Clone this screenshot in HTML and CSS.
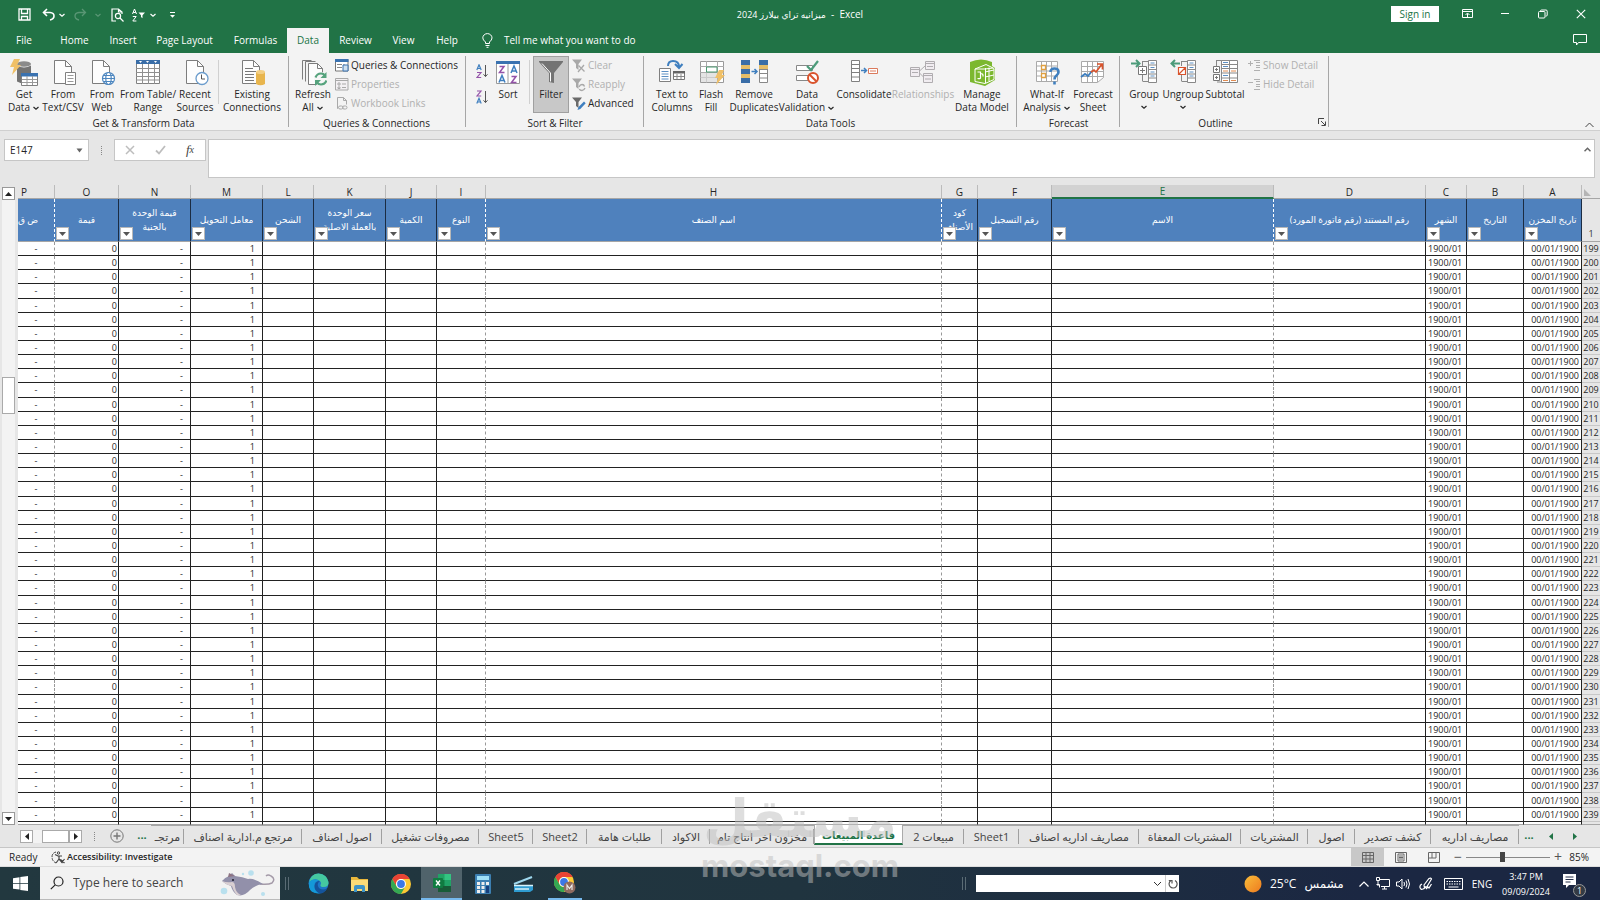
FILE: index.html
```html
<!DOCTYPE html>
<html lang="en">
<head>
<meta charset="utf-8">
<title>ميزانيه تراي بيلارز 2024 - Excel</title>
<link rel="stylesheet" href="styles.css">
</head>
<body>
<svg class="defs" aria-hidden="true">
  <symbol id="chev" viewBox="0 0 8 8"><path d="M1.5 3 4 5.3 6.500 3" fill="none" stroke="currentColor" stroke-width="1.2"/></symbol>
  <symbol id="page" viewBox="0 0 26 26"><path d="M4.500 1.500h11l6 6v17h-17z" fill="#fdfdfd" stroke="#7d7d7d"/><path d="M15.500 1.500v6h6" fill="none" stroke="#7d7d7d"/></symbol>
  <symbol id="funnel" viewBox="0 0 16 16"><path d="M1 1.500h10L7.500 6v6L5 10V6z" fill="currentColor"/></symbol>
  <symbol id="chrome" viewBox="0 0 20 20"><circle cx="10" cy="10" r="10" fill="#fcc934"/><path d="M1.300 5A10 10 0 0 1 18.700 5H10a5 5 0 0 0-4.400 7.400z" fill="#ea4335"/><path d="M1.300 5A10 10 0 0 0 10 20l4.300-7.500a5 5 0 0 1-8.700 0z" fill="#34a853"/><circle cx="10" cy="10" r="5" fill="#fff"/><circle cx="10" cy="10" r="3.900" fill="#3b78e7"/></symbol>
</svg>

<header class="top">
  <div class="titlebar">
    <div class="quick">
      <button class="q save" aria-label="Save"><svg width="13" height="13" viewBox="0 0 13 13" fill="none" stroke="#fff" stroke-width="1.300"><path d="M1 1h11v11H1zM3.500 1v4.500h6V1M3.500 12V8.500h6V12"/></svg></button>
      <button class="q undo" aria-label="Undo"><svg width="13" height="13" viewBox="0 0 13 13" fill="none" stroke="#fff" stroke-width="1.600"><path d="M5 1 1.500 4.500 5 8M1.500 4.500H8q4 .3 4 3.500 0 3-4 4"/></svg></button>
      <button class="q arrow" aria-label="Undo list"><svg width="8" height="8"><use href="#chev"/></svg></button>
      <button class="q redo faded" aria-label="Redo"><svg width="13" height="13" viewBox="0 0 13 13" fill="none" stroke="#fff" stroke-width="1.300"><path d="M8 1l3.500 3.500L8 8M11.500 4.500H5q-4 .3-4 3.500 0 3 4 4"/></svg></button>
      <button class="q arrow2 faded" aria-label="Redo list"><svg width="8" height="8"><use href="#chev"/></svg></button>
      <button class="q prev" aria-label="Print preview"><svg width="13" height="14" viewBox="0 0 13 14" fill="none" stroke="#fff" stroke-width="1.200"><path d="M5 13H1V1h6.500L11 4v2M7.500 1v3H11"/><circle cx="7" cy="8" r="2.600"/><path d="m9 10 3.500 3.500"/></svg></button>
      <button class="q sortq" aria-label="Sort and filter"><svg width="14" height="14" viewBox="0 0 14 14" fill="none" stroke="#fff"><path d="M.5 6 2.500 1l2 5M1.200 4.500h2.600M.8 8.500h3.400L.8 13h3.600"/><path d="M6.500 4.500h6.500l-2.500 2.700v3L9 9V7.200z" fill="#fff" stroke="none"/></svg></button>
      <button class="q arrow3" aria-label="Sort list"><svg width="8" height="8"><use href="#chev"/></svg></button>
      <button class="q more" aria-label="Customize toolbar"><svg width="7" height="8" viewBox="0 0 7 8"><path d="M1 1.500h5" stroke="#fff"/><path d="M1 4h5L3.500 6.700z" fill="#fff"/></svg></button>
    </div>
    <h1 class="title"><bdi dir="rtl">ميزانيه تراي بيلارز 2024</bdi>&nbsp; -&nbsp; Excel</h1>
    <div class="wincontrols">
      <button class="signin">Sign in</button>
      <button class="w1" aria-label="Ribbon display options"><svg width="11" height="10" viewBox="0 0 11 10" fill="none" stroke="#fff"><path d="M.5.5h10v8H.5zM.5 2.500h10M5.500 8V4.500M3.500 6l2-2 2 2"/></svg></button>
      <button class="w2" aria-label="Minimize"><svg width="10" height="10" viewBox="0 0 10 10" stroke="#fff"><path d="M1 4.500h8"/></svg></button>
      <button class="w2" aria-label="Restore"><svg width="10" height="10" viewBox="0 0 10 10" fill="none" stroke="#fff"><rect x=".5" y="2.500" width="6.500" height="6.500" rx="1"/><path d="M2.500 2.500V2q0-1 1-1h4.500q1.200 0 1.200 1.200v4q0 .9-1.500 1"/></svg></button>
      <button class="w2" aria-label="Close"><svg width="10" height="10" viewBox="0 0 10 10" stroke="#fff" stroke-width="1.100"><path d="m.8.8 8.400 8.400m0-8.400L.8 9.200"/></svg></button>
    </div>
  </div>
  <nav class="tabs">
    <a href="#" class="t-file">File</a><a href="#" class="t-home">Home</a><a href="#" class="t-ins">Insert</a><a href="#" class="t-page">Page Layout</a><a href="#" class="t-form">Formulas</a><a href="#" class="t-data on" aria-current="page">Data</a><a href="#" class="t-rev">Review</a><a href="#" class="t-view">View</a><a href="#" class="t-help">Help</a>
    <a href="#" class="tell"><svg width="11" height="15" viewBox="0 0 11 15" fill="none" stroke="#fff"><path d="M3.500 10.500V9Q.8 7 .8 4.900a4.600 4.300 0 0 1 9.200 0Q10 7 7.500 9v1.500zM3.500 12.500h4M4.500 14.300h2"/></svg>Tell me what you want to do</a>
    <button class="comment" aria-label="Comments"><svg width="14" height="12" viewBox="0 0 14 12" fill="none" stroke="#fff"><path d="M.5.5h13v8H5.500L3.500 11V8.500h-3z"/></svg></button>
  </nav>
</header>

<section class="ribbon" aria-label="Data ribbon">
  <div class="group g1">
    <div class="tools">
      <button class="big w38"><svg width="28" height="28" viewBox="0 0 28 28"><ellipse cx="14" cy="5" rx="7" ry="2.800" fill="#8a8a8a"/><path d="M7 6.500q7 4 14 0v16q-7 4-14 0z" fill="#737373"/><path d="M4 0h6L7 6h4L2 16l2-8H0z" fill="#f0c067"/><path d="M11.500 14.500h16v12h-16z" fill="#fff" stroke="#808080"/><path d="M11 14h17v3.500H11z" fill="#3a72b0"/><path d="M12 20.500h15M12 23.500h15M17 17v9M22.500 17v9" stroke="#999"/></svg><span>Get</span><span>Data <svg class="cv" width="8" height="8"><use href="#chev"/></svg></span></button>
      <button class="big w40"><svg width="28" height="28" viewBox="0 0 28 28"><use href="#page" x="1" y="0" width="26" height="26"/><path d="M16.500 13.500h10v12h-10z" fill="#fff" stroke="#808080"/><path d="M18.500 16.500h6M18.500 19.500h6M18.500 22.500h6" stroke="#999"/></svg><span>From</span><span>Text/CSV</span></button>
      <button class="big w38"><svg width="28" height="28" viewBox="0 0 28 28"><use href="#page" x="0" y="0" width="26" height="26"/><g fill="#fff" stroke="#4c86bf" stroke-width="1.200"><circle cx="20.500" cy="19.500" r="6"/><ellipse cx="20.500" cy="19.500" rx="2.700" ry="6"/><path d="M14.500 19.500h12M15.500 16.500h10M15.500 22.500h10"/></g></svg><span>From</span><span>Web</span></button>
      <button class="big w54"><svg width="28" height="28" viewBox="0 0 28 28"><path d="M2.500 2.500h23v22h-23z" fill="#fff" stroke="#808080"/><path d="M2 1h24v4H2z" fill="#3a6ea8"/><path d="m5 2 1.500 2L8 2m4 0 1.500 2L15 2m5 0 1.500 2L23 2" fill="#fff"/><path d="M2 9.500h24M2 13.500h24M2 17.500h24M2 21h24M8.500 5v20M14.500 5v20M20.500 5v20" stroke="#909090"/></svg><span>From Table/</span><span>Range</span></button>
      <button class="big w40"><svg width="28" height="28" viewBox="0 0 28 28"><use href="#page" x="1" y="0" width="26" height="26"/><circle cx="21" cy="19.500" r="6" fill="#fff" stroke="#6b9ccc" stroke-width="1.300"/><path d="M20.500 15.500v4.500h3.500" fill="none" stroke="#555"/></svg><span>Recent</span><span>Sources</span></button>
      <i class="vsep"></i>
      <button class="big w60"><svg width="28" height="28" viewBox="0 0 28 28"><use href="#page" x="0" y="0" width="26" height="26"/><path d="M7 9.500h8M7 12.500h11M7 15.500h9M7 18.500h9M7 21.500h9" stroke="#777"/><path d="M18 13v12q4.500 2.500 9 0V13z" fill="#e8b54d"/><ellipse cx="22.500" cy="13" rx="4.500" ry="2" fill="#f3cf84"/></svg><span>Existing</span><span>Connections</span></button>
    </div>
    <h2>Get &amp; Transform Data</h2>
  </div>
  <div class="group g2">
    <div class="tools">
      <button class="big w38"><svg width="28" height="28" viewBox="0 0 28 28"><path d="M3.500 20.500v-19h9M6.500 22.500v-20h10" fill="none" stroke="#7d7d7d"/><path d="M9.500 4.500h9l5 5v16h-14z" fill="#fdfdfd" stroke="#7d7d7d"/><path d="M18.500 4.500v5h5" fill="none" stroke="#7d7d7d"/><circle cx="22" cy="20" r="7" fill="#f6f6f6"/><path d="M16.500 18.500q1.500-4 5.500-4 2.500 0 4 2M27.500 21.500q-1.500 4-5.500 4-2.500 0-4-2" fill="none" stroke="#56a37d" stroke-width="2.200"/><path d="M27.500 13v6h-6zM16 27v-6h6z" fill="#56a37d"/></svg><span>Refresh</span><span>All <svg class="cv" width="8" height="8"><use href="#chev"/></svg></span></button>
      <div class="stack">
        <button class="small"><svg width="14" height="13" viewBox="0 0 14 13"><path d="M.5.5h12.500v11.500H.5z" fill="#fff" stroke="#777"/><path d="M0 0h13.500v3H0z" fill="#3a72b0"/><path d="M2 5.500h5M2 8.500h5M9 5v4" stroke="#888"/><path d="M8 6h5v6H8z" fill="#cfe0f0" stroke="#3a72b0"/></svg>Queries &amp; Connections</button>
        <button class="small" disabled><svg width="14" height="13" viewBox="0 0 14 13" fill="#f3f0f3" stroke="#a9a9a9"><path d="M.5.5h12.500v11.500H.5zM.5 2.500h12.500M3 5h2v2H3zM3 9h2v1.500H3zM7 6h4M7 9.500h4"/></svg>Properties</button>
        <button class="small" disabled><svg width="14" height="13" viewBox="0 0 14 13" fill="none" stroke="#a9a9a9"><path d="M3 11.500H2.500V.5h6l3 3v4M8.500.5v3h3"/><rect x="3.500" y="9" width="4.500" height="3" rx="1.500"/><rect x="7.500" y="9" width="4.500" height="3" rx="1.500"/></svg>Workbook Links</button>
      </div>
    </div>
    <h2>Queries &amp; Connections</h2>
  </div>
  <div class="group g3">
    <div class="tools">
      <div class="az">
        <button aria-label="Sort A to Z"><svg width="13" height="15" viewBox="0 0 13 15" fill="none"><path d="M.8 6 3 .8 5.200 6M1.600 4.500h2.800" stroke="#3f7fbf" stroke-width="1.200"/><path d="M1 8.500h4L1 13.500h4.200" stroke="#9352a8" stroke-width="1.200"/><path d="M9.500 1v11.500M7.500 10.300l2 2.300 2-2.300" stroke="#555"/></svg></button>
        <button aria-label="Sort Z to A"><svg width="13" height="15" viewBox="0 0 13 15" fill="none"><path d="M1 1h4L1 6h4.200" stroke="#9352a8" stroke-width="1.200"/><path d="M.8 13.500 3 8.300l2.200 5.200M1.600 12h2.800" stroke="#3f7fbf" stroke-width="1.200"/><path d="M9.500 1v11.500M7.500 10.300l2 2.300 2-2.300" stroke="#555"/></svg></button>
      </div>
      <button class="big w36"><svg width="28" height="28" viewBox="0 0 28 28" fill="none"><path d="M2.500 3.500h23v21h-23zM14 4v20" fill="#fff" stroke="#999"/><path d="M2 2h24v3H2z" fill="#3a72b0"/><path d="M5.500 7.500h4.500l-4.500 6h5M17.500 17.500H22l-4.500 6h5" stroke="#9352a8" stroke-width="1.500"/><path d="m5 23.500 3-7 3 7M6 21.500h4M17 14l3-7 3 7M18 12h4" stroke="#3f7fbf" stroke-width="1.500"/></svg><span>Sort</span></button>
      <i class="vsep"></i>
      <button class="big w36 pressed" aria-pressed="true"><svg width="28" height="28" viewBox="0 0 28 28"><path d="M2 2h24v1L17 14v10l-5-1V14L2 3z" fill="#737373"/><path d="M5 4.500 13.500 14v8.500" fill="none" stroke="#fff"/></svg><span>Filter</span></button>
      <div class="stack">
        <button class="small" disabled><svg width="14" height="14" viewBox="0 0 14 14" color="#a8a8a8"><use href="#funnel" x="-1" y="-1" width="16" height="16"/><path d="m6.500 6.500 6 6M12 6l-6 7" stroke="#a8a8a8" stroke-width="1.300"/></svg>Clear</button>
        <button class="small" disabled><svg width="14" height="14" viewBox="0 0 14 14" color="#a8a8a8"><use href="#funnel" x="-1" y="-1" width="16" height="16"/><path d="M7 9q1-2.500 3-2.500t2.500 2M13 10q-1 2.500-3 2.500T7.300 11" fill="none" stroke="#a8a8a8" stroke-width="1.300"/></svg>Reapply</button>
        <button class="small"><svg width="14" height="14" viewBox="0 0 14 14" color="#6a6a6a"><use href="#funnel" x="-1" y="-1" width="16" height="16"/><path d="m5.500 13 1-3L12 4.500l1.700 1.700L8.300 12z" fill="#3f7fbf"/></svg>Advanced</button>
      </div>
    </div>
    <h2>Sort &amp; Filter</h2>
  </div>
  <div class="group g4">
    <div class="tools">
      <button class="big w42"><svg width="28" height="28" viewBox="0 0 28 28" fill="none"><path d="M10 7q0-5 5-5 6 0 6 6M17 5l4 4 3.500-4" stroke="#3f7fbf" stroke-width="2"/><path d="M1.500 9.500h11v13h-11z" fill="#fff" stroke="#808080"/><path d="M3.500 12.500h7M3.500 15h7M3.500 17.500h7M3.500 20h7" stroke="#5c90c4"/><path d="M15.500 12.500h11v8h-11z" fill="#fff" stroke="#777"/><path d="M15 12h12v2.500H15z" fill="#666"/><path d="M16 17.500h10M19 15v5M23 15v5" stroke="#888"/></svg><span>Text to</span><span>Columns</span></button>
      <button class="big w36"><svg width="28" height="28" viewBox="0 0 28 28" fill="none"><path d="M3.500 2.500h23v21h-23z" fill="#fff" stroke="#999"/><path d="M3 7.500h24M3 13.500h24M3 18.500h24M9.500 2v22M20.500 2v22" stroke="#aaa"/><path d="M9.500 8h10.500v5H9.500z" fill="#fff" stroke="#4c9b72"/><path d="M4 14h16v9H4z" fill="#d8d8d8" opacity=".7"/><path d="M22 11h5l-2 5h3l-9 10 2-7h-3z" fill="#f0c067"/></svg><span>Flash</span><span>Fill</span></button>
      <button class="big w50"><svg width="28" height="28" viewBox="0 0 28 28" fill="none"><path d="M1 1h9v23H1z" fill="#3a6ea8"/><path d="M1 6h9v4H1zM1 15h9v4H1z" fill="#e5bd68"/><path d="M19.500 1.500h8v22h-8zM19 6.500h9M19 10.500h9M19 14.500h9M19 19h9" stroke="#888" fill="#fff"/><path d="M19 1h9v5h-9z" fill="#3a6ea8"/><path d="M19 6h9v4h-9z" fill="#e5bd68"/><path d="M11.500 12.500h5M14.500 10l2.500 2.500-2.500 2.500" stroke="#3f7fbf" stroke-width="1.500"/></svg><span>Remove</span><span>Duplicates</span></button>
      <button class="big w56"><svg width="28" height="28" viewBox="0 0 28 28" fill="none"><path d="M3.500 6.500h16v5h-16zM3.500 16.500h13v5h-13z" fill="#fff" stroke="#888"/><path d="m14 7 4 4 7-9" stroke="#4c9b7a" stroke-width="2.200"/><circle cx="20" cy="19" r="5" fill="#fff" stroke="#d9532c" stroke-width="2"/><path d="m16.500 15.500 7 7" stroke="#d9532c" stroke-width="2"/></svg><span>Data</span><span>Validation<svg class="cv" width="8" height="8"><use href="#chev"/></svg></span></button>
      <button class="big w58"><svg width="28" height="28" viewBox="0 0 28 28" fill="none"><path d="M1.500 1.500h8v21h-8zM1 5.500h9M1 9.500h9M1 13.500h9M1 18h9" fill="#fff" stroke="#808080"/><path d="M11 11.500h5M14 9l2.500 2.500L14 14" stroke="#3f7fbf" stroke-width="1.500"/><path d="M18.500 9.500h9v5h-9zM20 12h6" fill="#fff" stroke="#db7a5c"/></svg><span>Consolidate</span></button>
      <button class="big w60" disabled><svg width="28" height="28" viewBox="0 0 28 28" fill="#f1edf1" stroke="#b0adb0"><path d="M1.500 8.500h9v9h-9zM1.500 10.500h9M16.500 2.500h9v8h-9zM16.500 4.500h9M14.500 14.500h9v9h-9zM14.500 16.500h9M10.500 12 16 7M10.500 14l4 4M3 13.500h6M18 7.500h6M16 20h6"/></svg><span>Relationships</span></button>
      <button class="big w54 ml2"><svg width="28" height="28" viewBox="0 0 28 28"><path d="M2 3q11-5 22 0v4l3 2v12l-10 6L2 23z" fill="#7cb82f"/><path d="M7 10 18 5.500l8 4v11l-9 4-10-2z" fill="#7cb82f" stroke="#fff"/><path d="M17.500 9v15M21 8.500V22M17 13l9-2M17 18l9-2M7 10l10 0 8-1" stroke="#fff" fill="none"/><path d="M9.500 13h3v6q0 1-3 .5M12.500 14.500q3 0 2.500 3" stroke="#fff" stroke-width="1.200" fill="none"/></svg><span>Manage</span><span>Data Model</span></button>
    </div>
    <h2>Data Tools</h2>
  </div>
  <div class="group g5">
    <div class="tools">
      <button class="big w46"><svg width="28" height="28" viewBox="0 0 28 28" fill="none"><path d="M3.500 2.500h21v20h-21zM3 7h22M3 12h22M3 17h22M8.500 2v21M13.500 2v21M18.500 2v21" stroke="#aaa" fill="#fff"/><path d="M8.500 6.500h4v4h-4zM8.500 14.500h4v4h-4z" stroke="#e0a040" stroke-width="1.300" fill="#fff"/><path d="M17.500 13q0-3.500 4-3.500t4 3.500q0 2-2 3.500t-2 4M21.500 22.500v3" stroke="#3f7fbf" stroke-width="2.600"/></svg><span>What-If</span><span>Analysis <svg class="cv" width="8" height="8"><use href="#chev"/></svg></span></button>
      <button class="big w46"><svg width="28" height="28" viewBox="0 0 28 28" fill="none"><path d="M2.500 2.500h22v16l-6 5h-16zM3 7.500h21M3 12.500h21M3 17.500h21M8.500 2v21M13.500 2v21M18.500 2v21" stroke="#aaa" fill="#fff"/><path d="m2 18 4-3 3 2 4-5" stroke="#3f7fbf" stroke-width="2"/><path d="m12 13 3-2 2 2 6-8M18 5h5.500v5.500" stroke="#d9532c" stroke-width="1.700"/></svg><span>Forecast</span><span>Sheet</span></button>
    </div>
    <h2>Forecast</h2>
  </div>
  <div class="group g6">
    <div class="tools">
      <button class="big w34"><svg width="28" height="28" viewBox="0 0 28 28" fill="none"><path d="M13 2.500h6M12.500 2v5M13 22.500h6M12.500 16v6.500" stroke="#888"/><path d="M18.500 1.500h8v22h-8zM18 6h9M18 10.500h9M18 15h9M18 19h9" fill="#fff" stroke="#888"/><path d="M20.500 4h4M20.500 8.500h4M20.500 13h4M20.500 17h4" stroke="#5c90c4"/><path d="M8.500 7.500h8v8h-8zM10 11.500h5M12.500 9v5" fill="#fff" stroke="#777"/><path d="M1 4.500h8M6 1l3.500 3.500L6 8" stroke="#4c9b7a" stroke-width="2"/></svg><span>Group</span><span><svg class="cv only" width="8" height="8"><use href="#chev"/></svg></span></button>
      <button class="big w44"><svg width="28" height="28" viewBox="0 0 28 28" fill="none"><path d="M13 2.500h6M12.500 2v5M13 22.500h6M12.500 16v6.500" stroke="#888"/><path d="M18.500 1.500h8v22h-8zM18 6h9M18 10.500h9M18 15h9M18 19h9" fill="#fff" stroke="#888"/><path d="M20.500 4h4M20.500 8.500h4M20.500 13h4M20.500 17h4" stroke="#5c90c4"/><path d="M9.500 8.500h7v7h-7zM10 15l6-6" fill="#fff" stroke="#d9532c" stroke-width="1.200"/><path d="M3 4.500h8M6 1 2.500 4.500 6 8" stroke="#4c9b7a" stroke-width="2"/></svg><span>Ungroup</span><span><svg class="cv only" width="8" height="8"><use href="#chev"/></svg></span></button>
      <button class="big w40"><svg width="28" height="28" viewBox="0 0 28 28" fill="none"><path d="M6 1.500h5M5.500 1v7M6 23h5" stroke="#888"/><path d="M10.500 1.500h16v22h-16zM10 5.500h17M10 9.500h17M10 14h17M10 19h17M18.500 1v23" fill="#fff" stroke="#888"/><path d="M12 12h5M20 12h5M12 21.500h5M20 21.500h5" stroke="#e08a50"/><path d="M12 3.500h5M12 7.500h5M12 16.500h5" stroke="#5c90c4"/><path d="M2.500 7.500h6v6h-6zM4 10.500h3M5.500 9v3M2.500 15.500h6v6h-6zM4 18.500h3M5.500 17v3" fill="#fff" stroke="#777"/></svg><span>Subtotal</span></button>
      <div class="stack">
        <button class="small" disabled><svg width="13" height="13" viewBox="0 0 13 13" fill="none" stroke="#b0b0b0"><path d="M0 4.500h5M2.500 2v5M6 1.500h6M8 3.500h4M8 6.500h4M8 8.500h4M6 11.500h6"/></svg>Show Detail</button>
        <button class="small" disabled><svg width="13" height="13" viewBox="0 0 13 13" fill="none" stroke="#b0b0b0"><path d="M0 4.500h5M6 1.500h6M8 3.500h4M8 6.500h4M8 8.500h4M6 11.500h6"/></svg>Hide Detail</button>
      </div>
    </div>
    <h2 class="outline-title">Outline</h2>
    <button class="launcher" aria-label="Outline settings"><svg width="8" height="8" viewBox="0 0 8 8" fill="none" stroke="#444"><path d="M.5 6V.5H6M3 3l4 4M7.500 3.500v4h-4"/></svg></button>
  </div>
  <button class="collapse" aria-label="Collapse ribbon"><svg width="9" height="6" viewBox="0 0 9 6" fill="none" stroke="#444"><path d="m.5 5 4-4 4 4"/></svg></button>
</section>

<section class="formula">
  <div class="namebox"><input aria-label="Name box" value="E147"><svg width="7" height="5" viewBox="0 0 7 5"><path d="M.5.500h6L3.500 4.500z" fill="#666"/></svg></div>
  <span class="grip"></span>
  <div class="fxbox">
    <button aria-label="Cancel"><svg width="10" height="10" viewBox="0 0 10 10" stroke="#bdbdbd" stroke-width="1.500"><path d="m1 1 8 8m0-8L1 9"/></svg></button>
    <button aria-label="Enter"><svg width="11" height="10" viewBox="0 0 11 10" fill="none" stroke="#bdbdbd" stroke-width="1.800"><path d="m1 5.500 3 3L10 1"/></svg></button>
    <button class="fx" aria-label="Insert function">f<small>x</small></button>
  </div>
  <div class="fbar"><input aria-label="Formula bar"><svg width="7" height="5" viewBox="0 0 7 5" fill="none" stroke="#666" stroke-width="1.500"><path d="m.5 4.300 3-3 3 3"/></svg></div>
</section>

<main class="sheet">
  <div class="vscroll">
    <button aria-label="Scroll up"><svg width="7" height="4" viewBox="0 0 7 4"><path d="M0 4h7L3.500 0z" fill="#222"/></svg></button>
    <div class="track"><span class="thumb"></span></div>
    <button aria-label="Scroll down"><svg width="7" height="4" viewBox="0 0 7 4"><path d="M0 0h7L3.500 4z" fill="#222"/></svg></button>
  </div>
  <div class="gridwrap">
    <table class="grid" dir="rtl">
      <colgroup><col class="c-num"><col class="c-a"><col class="c-b"><col class="c-c"><col class="c-d"><col class="c-e"><col class="c-f"><col class="c-g"><col class="c-h"><col class="c-i"><col class="c-j"><col class="c-k"><col class="c-l"><col class="c-m"><col class="c-n"><col class="c-o"><col class="c-p"></colgroup>
      <thead>
        <tr class="letters"><th class="corner"><svg width="7" height="7" viewBox="0 0 7 7"><path d="M0 0v7h7z" fill="#b5b5b5"/></svg></th><th>A</th><th>B</th><th>C</th><th>D</th><th class="sel">E</th><th>F</th><th>G</th><th>H</th><th>I</th><th>J</th><th>K</th><th>L</th><th>M</th><th>N</th><th>O</th><th class="cut">P</th></tr>
        <tr class="names"><th class="num">1</th><th>تاريخ المخزن</th><th>التاريخ</th><th>الشهر</th><th>رقم المستند (رقم فاتورة المورد)</th><th>الاسم</th><th>رقم التسجيل</th><th>كود الأصناف</th><th>اسم الصنف</th><th>النوع</th><th>الكمية</th><th>سعر الوحدة بالعملة الاصلية</th><th>الشحن</th><th>معامل التحويل</th><th>قيمة الوحدة بالجنية</th><th>قيمة</th><th class="cut">ض ق</th></tr>
      </thead>
      <tbody id="rows"></tbody>
    </table>
  </div>
</main>

<footer class="bottom">
  <div class="sheetbar">
    <div class="hscroll"><button aria-label="Scroll left"><svg width="4" height="7" viewBox="0 0 4 7"><path d="M4 0v7L0 3.500z" fill="#222"/></svg></button><span class="htrack"></span><span class="hthumb"></span><button aria-label="Scroll right"><svg width="4" height="7" viewBox="0 0 4 7"><path d="M0 0v7l4-3.500z" fill="#222"/></svg></button></div>
    <span class="grip"></span>
    <button class="add" aria-label="New sheet"><svg width="14" height="14" viewBox="0 0 14 14" fill="none" stroke="#777"><circle cx="7" cy="7" r="6.200"/><path d="M3.500 7h7M7 3.500v7" stroke-width="1.400"/></svg></button>
    <span class="dots first">...</span>
    <nav class="sheets">
      <a href="#" class="s34" dir="rtl">مرتجـ</a><a href="#" class="s118" dir="rtl">مرتجع م.ادارية اصناف</a><a href="#" class="s80">اصول اصناف</a><a href="#" class="s97">مصروفات تشغيل</a><a href="#" class="s54">Sheet5</a><a href="#" class="s54">Sheet2</a><a href="#" class="s75">طلبات هامة</a><a href="#" class="s48">الاكواد</a><a href="#" class="s104">مخزون اخر انتاج تام</a><a href="#" class="s89 current" aria-current="page">قاعدة المبيعات</a><a href="#" class="s61" dir="rtl">مبيعات 2</a><a href="#" class="s55">Sheet1</a><a href="#" class="s120">مصاريف اداريه اصناف</a><a href="#" class="s102">المشتريات المعفاة</a><a href="#" class="s67">المشتريات</a><a href="#" class="s47">اصول</a><a href="#" class="s76">كشف تصدير</a><a href="#" class="s88">مصاريف اداريه</a>
    </nav>
    <span class="dots">...</span>
    <button class="nav" aria-label="Previous sheet"><svg width="4" height="7" viewBox="0 0 4 7"><path d="M4 0v7L0 3.500z" fill="#217346"/></svg></button>
    <button class="nav" aria-label="Next sheet"><svg width="4" height="7" viewBox="0 0 4 7"><path d="M0 0v7l4-3.500z" fill="#217346"/></svg></button>
  </div>
  <div class="status">
    <span class="ready">Ready</span>
    <button class="acc"><svg width="14" height="13" viewBox="0 0 14 13" fill="none" stroke="#444"><path d="M5 1Q1 2 1 6t4 6" stroke-dasharray="3 1"/><circle cx="7.500" cy="2" r="1.200"/><path d="m4 3.500 3 1.500h4M8 5v3l3.500 4M8 8l-3 4M9.500 8.500l4 3.500M13.500 8l-3 4" stroke-width="1.200"/></svg>Accessibility: Investigate</button>
    <div class="views">
      <button class="on" aria-label="Normal view"><svg width="12" height="11" viewBox="0 0 12 11" fill="none" stroke="#666"><path d="M.5.500h11v10H.5zM0 3.500h12M0 7h12M4 0v11M8 0v11"/></svg></button>
      <button aria-label="Page layout view"><svg width="12" height="11" viewBox="0 0 12 11" fill="none" stroke="#666"><path d="M.5.500h11v10H.5zM3 2h6v7H3zM4 4h4M4 5.500h4M4 7h4"/></svg></button>
      <button aria-label="Page break view"><svg width="12" height="11" viewBox="0 0 12 11" fill="none" stroke="#666"><path d="M.5.500h11v10H.5zM4 0v6M8 0v6M1 6h7"/></svg></button>
    </div>
    <button class="z" aria-label="Zoom out">−</button>
    <input class="zoom" type="range" min="10" max="160" value="74" aria-label="Zoom">
    <button class="z" aria-label="Zoom in">+</button>
    <span class="pct">85%</span>
  </div>
  <div class="taskbar">
    <button class="start" aria-label="Start"><svg width="15" height="15" viewBox="0 0 15 15" fill="#fff"><path d="M0 2.200 6.500 1.200V7H0zM7.300 1 15 0v7H7.300zM0 7.800h6.500v5.800L0 12.700zM7.300 7.800H15V15l-7.700-1z"/></svg></button>
    <label class="search"><svg width="14" height="14" viewBox="0 0 14 14" fill="none" stroke="#222" stroke-width="1.200"><circle cx="8.500" cy="5.500" r="4.500"/><path d="M5.200 8.800.8 13.200"/></svg><input type="text" placeholder="Type here to search">
      <svg width="56" height="28" viewBox="0 0 56 28"><circle cx="31" cy="4" r="2.800" fill="#b9e0ee"/><circle cx="4" cy="22" r="3.300" fill="#b9e0ee"/><circle cx="43" cy="25" r="2" fill="#b9e0ee"/><circle cx="23" cy="5" r="1.200" fill="#b9e0ee"/><path d="M40 15q8 1 12-1 4-4-1-7-3-2-5 0" fill="none" stroke="#a49aa8" stroke-width="1.500"/><path d="M2 12q2-3 7-5l3-3 3 3q8 1 13 3 6-1 15 5-8 1-13 6-6 7-13 5-5-4-6-9-6-2-9-5z" fill="#9290aa"/><path d="M2 12q5 2 10 1 3 0 3 5 1 6 6 8-4 1-5-1-3-4-4-8-6-1-10-5z" fill="#d9cfd2"/><path d="m8 8 1-4 6 3z" fill="#8d7383"/><circle cx="13" cy="11" r="1.100" fill="#223"/></svg></label>
    <span class="tgrip"></span>
    <div class="apps">
      <button aria-label="Edge"><svg width="21" height="21" viewBox="0 0 21 21"><circle cx="10.500" cy="10.500" r="10" fill="#1d78c8"/><path d="M1 9Q3 .5 10.500.5 19 1 20.500 9q.5 5-5 5-3.500 0-3-2 1.500-2-.5-4Q7 4 1 9z" fill="#45c9a0"/><path d="M1 9q5-5 10-1Q6 8 6.500 13q1 5 6 7Q3 21.500 1 14z" fill="#1499d8"/><path d="M12 8q-4 3-1 7 4 3 8.500 0-3 5.500-8 5.500Q6 18 6.500 13 7 8 12 8z" fill="#14549c"/></svg></button>
      <button aria-label="File Explorer"><svg width="19" height="18" viewBox="0 0 19 18"><path d="M1 2h6l2 2h9v12H1z" fill="#e9b73c"/><path d="M1 5h17v11H1z" fill="#fbdc78"/><path d="M4 17v-5q0-2 2-2h7q2 0 2 2v5h-3v-3H7v3z" fill="#3d94c8"/></svg></button>
      <button aria-label="Chrome"><svg width="20" height="20"><use href="#chrome"/></svg></button>
      <button class="active wide" aria-label="Excel"><svg width="18" height="18" viewBox="0 0 18 18"><path d="M5 0h13v18H5z" fill="#21a366"/><path d="M11.500 0H18v6h-6.500z" fill="#33c481"/><path d="M5 6h6.500v6H5z" fill="#107c41"/><path d="M5 12h13v6H5z" fill="#185c37"/><rect y="4" width="10" height="10" rx="1" fill="#107c41"/><path d="m3 6.500 4 5m0-5-4 5" stroke="#fff" stroke-width="1.400"/></svg></button>
      <button aria-label="Calculator"><svg width="16" height="20" viewBox="0 0 16 20"><rect width="16" height="20" rx="1" fill="#3c7fb1"/><path d="M2 2h12v4H2z" fill="#9fe0f7"/><path d="M2 8h3v3H2zM6.500 8h3v3h-3zM2 12h3v3H2zM6.500 12h3v3h-3zM2 16h3v3H2zM6.500 16h3v3h-3zM11 8h3v3h-3z" fill="#eee"/><path d="M11 12h3v7h-3z" fill="#173f7c"/></svg></button>
      <button aria-label="Scanner"><svg width="21" height="16" viewBox="0 0 21 16"><path d="m1 8 18-7" stroke="#9fd8ee" stroke-width="2"/><path d="M1 9h19v5l-3 2H1z" fill="#2f9bd0"/><path d="M1 9.500h19M2 13h14" stroke="#d7f3fc" stroke-width="1.600"/></svg></button>
      <button class="active second" aria-label="Chrome profile"><svg width="22" height="22" viewBox="0 0 22 22"><use href="#chrome" width="20" height="20"/><circle cx="15.500" cy="15.500" r="6" fill="#8f6b60"/><path d="M13 18v-5l2.500 3.500L18 13v5" fill="none" stroke="#eee" stroke-width="1.100"/></svg></button>
    </div>
    <span class="tgrip mid"></span>
    <div class="addr"><input aria-label="Address"><button aria-label="Address list"><svg width="9" height="6" viewBox="0 0 9 6" fill="none" stroke="#333"><path d="m1 1 3.500 3.500L8 1"/></svg></button><button class="go" aria-label="Refresh"><svg width="10" height="10" viewBox="0 0 10 10" fill="none" stroke="#555" stroke-width="1.200"><path d="M7 1.500A4 4 0 1 1 3 1.600M.8 1.500H4V4.500"/></svg></button></div>
    <button class="weather"><svg width="18" height="18" viewBox="0 0 18 18"><defs><linearGradient id="sun" x1="0" y1="0" x2="1" y2="1"><stop offset="0" stop-color="#f9bd3a"/><stop offset="1" stop-color="#ee7a1f"/></linearGradient></defs><circle cx="9" cy="9" r="8.500" fill="url(#sun)"/></svg><span>25°C</span><span dir="rtl">مشمس</span></button>
    <div class="tray">
      <button class="t1" aria-label="Hidden icons"><svg width="10" height="6" viewBox="0 0 10 6" fill="none" stroke="#fff" stroke-width="1.200"><path d="m.5 5.500 4.500-4.500 4.500 4.500"/></svg></button>
      <button class="t2" aria-label="Network"><svg width="14" height="13" viewBox="0 0 14 13" fill="none" stroke="#fff"><path d="M4 2.500h9.500v7H5M8.500 9.500v2.500M6 12h5M.5.500h3v3h-3zM2 3.500V9M.5 7.500h3v3"/></svg></button>
      <button class="t2" aria-label="Volume"><svg width="15" height="12" viewBox="0 0 15 12" fill="none" stroke="#fff"><path d="M.5 4h2.500l3-3v10l-3-3H.5zM8 4q1 2 0 4M10 2.500q2 3.500 0 7M12 1q3 5 0 10"/></svg></button>
      <button class="t3" aria-label="Pen"><svg width="14" height="14" viewBox="0 0 14 14" fill="none" stroke="#fff" stroke-width="1.200"><path d="M5 8 10 1.500q2-1 2.500.5L8 9.500 5.500 11zM3 7q-2.500 1-2 3.500T4 12q2 0 2-3M7 12l2-2 1 1 2.500-4"/></svg></button>
      <button class="t4" aria-label="Keyboard"><svg width="19" height="12" viewBox="0 0 19 12" fill="none" stroke="#fff"><path d="M.5.500h18v11H.5z"/><path d="M2.500 3.500h14M2.500 6h14" stroke-dasharray="1.500 1"/><path d="M4.500 9h10"/></svg></button>
      <span class="eng">ENG</span>
      <time class="clock"><span>3:47 PM</span><span>09/09/2024</span></time>
      <button class="notif" aria-label="Notifications"><svg width="21" height="21" viewBox="0 0 21 21"><path d="M1 1h13v11H7l-3 3v-3H1z" fill="#fff"/><path d="M3.500 4h8M3.500 6.500h8M3.500 9h5" stroke="#26314a"/></svg><b>1</b></button>
    </div>
  </div>
</footer>

<div class="watermark" aria-hidden="true"><span class="wm-ar">مستقل</span><span class="wm-en">mostaql.com</span></div>
<script src="app.js"></script>
</body>
</html>
```
FILE: styles.css
```css
* { box-sizing: border-box; }
body { margin: 0; height: 100vh; display: flex; flex-direction: column; overflow: hidden; background: #e6e6e6; color: #262626; font: 11px/14px "Open Sans", "Noto Sans", "DejaVu Sans", sans-serif; }
button { border: 0; padding: 0; margin: 0; background: none; color: inherit; font: inherit; display: flex; align-items: center; justify-content: center; }
input { border: 0; padding: 0; margin: 0; font: inherit; color: inherit; background: none; min-width: 0; outline: 0; }
a { color: inherit; text-decoration: none; }
svg { display: block; flex: none; }
h1, h2 { margin: 0; font-weight: 400; }
.defs { position: absolute; width: 0; height: 0; }

/* Title bar and ribbon tabs */
.top { background: #217346; color: #fff; flex: none; }
.titlebar { height: 28px; display: grid; grid-template-columns: 1fr auto 1fr; align-items: center; }
.quick { display: flex; height: 28px; padding-left: 14px; }
.q { height: 28px; flex: none; }
.save { width: 20px; }
.undo { width: 28px; }
.arrow { width: 8px; margin-left: -4px; }
.redo { width: 28px; }
.arrow2 { width: 8px; }
.prev { width: 30px; }
.sortq { width: 14px; }
.arrow3 { width: 14px; }
.more { width: 24px; }
.faded { opacity: .25; }
.title { font-size: 10px; line-height: 28px; white-space: pre; }
.title bdi { font-size: 9px; }
.wincontrols { display: flex; justify-content: flex-end; align-items: center; height: 28px; padding-bottom: 2px; }
.signin { background: #fff; color: #217346; width: 48px; height: 16px; font-size: 10px; margin: 1px 9px 0 0; }
.w1, .w2 { width: 38px; height: 26px; }
.tabs { height: 25px; display: flex; font-size: 10px; line-height: 25px; }
.tabs a { text-align: center; flex: none; height: 25px; }
.t-file { width: 48px; } .t-home { width: 53px; } .t-ins { width: 44px; } .t-page { width: 79px; } .t-form { width: 63px; }
.t-data { width: 42px; } .t-rev { width: 53px; } .t-view { width: 43px; } .t-help { width: 44px; }
.tabs .on { background: #f3f3f3; color: #217346; }
.tabs .tell { display: flex; align-items: center; gap: 11px; margin-left: 13px; }
.comment { margin-left: auto; width: 40px; height: 24px; }

/* Ribbon */
.ribbon { height: 78px; flex: none; background: #f3f3f3; border-bottom: 1px solid #cfcfcf; display: flex; font-size: 10px; line-height: 13px; }
.group { border-right: 1px solid #a6a6a6; margin: 3px 0; display: flex; flex-direction: column; position: relative; flex: none; }
.group h2 { text-align: center; font-size: 10px; line-height: 12px; margin-top: 4px; padding-right: 6px; }
.group .outline-title { padding-right: 24px; }
.g1 { width: 289px; padding-left: 5px; } .g2 { width: 177px; padding-left: 5px; } .g3 { width: 178px; padding-left: 7px; }
.g4 { width: 373px; padding-left: 7px; } .g5 { width: 103px; padding-left: 7px; } .g6 { width: 209px; padding-left: 7px; }
.tools { display: flex; height: 57px; white-space: nowrap; }
.big { flex-direction: column; justify-content: flex-start; height: 57px; padding-top: 3px; flex: none; }
.big > svg { margin-bottom: 1px; }
.big span { display: flex; align-items: center; height: 13px; }
.big .cv { margin-left: 2px; }
.big .only { margin-left: 0; }
.big:disabled, .small:disabled { color: #b0b0b0; }
.w34 { width: 34px; } .w36 { width: 36px; } .w38 { width: 38px; } .w40 { width: 40px; } .w42 { width: 42px; } .w44 { width: 44px; } .w46 { width: 46px; }
.w50 { width: 50px; } .w54 { width: 54px; } .w56 { width: 56px; } .w58 { width: 58px; } .w60 { width: 60px; }
.ml2 { margin-left: 2px; }
.vsep { width: 1px; height: 44px; margin: 4px 3px 0; background: #d0d0d0; flex: none; }
.pressed { background: #c8c8c8; outline: 1px solid #a0a0a0; outline-offset: -1px; }
.stack { padding-left: 3px; }
.small { height: 19px; gap: 2px; justify-content: flex-start; }
.az { width: 17px; padding: 8px 0 0 3px; }
.az button { height: 26px; align-items: flex-start; }
.launcher { position: absolute; right: 2px; bottom: 1px; }
.collapse { margin: auto 6px 1px auto; width: 10px; height: 8px; }

/* Formula bar */
.formula { height: 53px; flex: none; display: flex; padding: 8px 5px 6px 4px; align-items: flex-start; }
.namebox { width: 85px; height: 22px; background: #fff; border: 1px solid #c6c6c6; display: flex; align-items: center; padding: 0 5px; }
.namebox input { flex: 1; width: 0; font-size: 10px; }
.grip { width: 1px; height: 9px; border-left: 1px dotted #888; margin: 7px 12px; flex: none; }
.fxbox { width: 92px; height: 22px; background: #fff; border: 1px solid #c6c6c6; display: flex; }
.fxbox button { flex: 1; }
.fxbox .fx { font: italic 13px/16px "Liberation Serif", serif; color: #444; }
.fx small { font-size: 10px; }
.fbar { flex: 1; margin-left: 2px; height: 39px; background: #fff; border: 1px solid #c6c6c6; display: flex; align-items: flex-start; padding: 7px 3px; }
.fbar input { flex: 1; }

/* Worksheet */
.sheet { flex: 1; min-height: 0; display: flex; padding-top: 1px; }
.vscroll { width: 18px; flex: none; display: flex; flex-direction: column; padding: 2px 3px 0 2px; }
.vscroll button { width: 13px; height: 13px; background: #fff; border: 1px solid #999; flex: none; }
.track { flex: 1; background: #f3f3f3; display: grid; grid-template-rows: 29fr 6fr 65fr; }
.thumb { grid-row: 2; background: #fff; border: 1px solid #aaa; }
.gridwrap { flex: 1; min-width: 0; overflow: hidden; }
.grid { table-layout: fixed; width: 100%; height: 100%; border-collapse: separate; border-spacing: 0; }
.c-num { width: 18px; } .c-a { width: 58px; } .c-b { width: 57px; } .c-c { width: 41px; } .c-d { width: 152px; } .c-e { width: 222px; } .c-f { width: 74px; } .c-g { width: 36px; }
.c-i { width: 49px; } .c-j { width: 51px; } .c-k { width: 72px; } .c-l { width: 51px; } .c-m { width: 72px; } .c-n { width: 72px; } .c-o { width: 64px; } .c-p { width: 37px; }
.grid th, .grid td { padding: 0; font-weight: 400; overflow: hidden; }
.letters th { height: 13px; line-height: 12px; font-size: 10px; border-right: 1px solid #bbb; border-bottom: 1px solid #a6a6a6; }
.letters .corner { border-right: 0; }
.corner svg { margin: 2px auto 0 2px; }
.letters .sel { background: #d2d2d2; color: #217346; border-bottom: 2px solid #217346; }
.grid .letters .cut { text-align: left; padding-left: 3px; }
.names th { height: 43px; background: #4f81bd; color: #fff; font-size: 9px; line-height: 14px; position: relative; border-right: 1px solid #1b2c42; border-bottom: 1px solid #a6a6a6; }
.grid .names th { padding: 0 4px; }
.grid .names .cut { text-align: left; padding: 0; }
.grid .names .num { background: #e6e6e6; color: #333; vertical-align: bottom; padding: 0; border-right: 0; text-align: center; }
.filter { position: absolute; left: 1px; bottom: 1px; width: 13px; height: 13px; background: #fff; border: 1px solid #b8b8b8; }
.grid td { font-size: 9px; line-height: 13px; border-right: 1px solid #222; border-bottom: 1px solid #222; background: #fff; white-space: nowrap; }
.grid tbody th { font-size: 9px; line-height: 13px; border-bottom: 1px solid #c8c8c8; text-align: center; }
.grid .v-a { text-align: right; padding-right: 2px; }
.grid .v-c { text-align: left; padding-left: 2px; }
.grid .v-m, .grid .v-n { text-align: right; padding-right: 7px; }
.grid .v-o { text-align: right; padding-right: 1px; }
.grid .v-p { text-align: center; }
.grid td.dashed { border-right: 1px dashed #999; }
.grid .names .dashed { border-right: 1px dashed #fff; }
.grid .sliver td, .grid .sliver th { height: 3px; line-height: 3px; border-bottom: 1px solid #a6a6a6; }

/* Sheet tabs */
.bottom { flex: none; }
.sheetbar { height: 23px; display: flex; align-items: stretch; color: #444; border-bottom: 1px solid #c6c6c6; }
.hscroll { display: flex; align-items: center; padding-left: 20px; }
.hscroll button { width: 13px; height: 13px; background: #fff; border: 1px solid #aaa; }
.htrack { width: 9px; height: 13px; background: #f3f3f3; }
.hthumb { width: 27px; height: 13px; background: #fff; border: 1px solid #aaa; }
.add { width: 20px; }
.dots { width: 20px; text-align: center; color: #217346; font-weight: 700; line-height: 20px; flex: none; }
.dots.first { width: 24px; padding-left: 6px; }
.sheets { flex: 1; display: flex; min-width: 0; overflow: hidden; line-height: 21px; }
.sheets a { position: relative; text-align: center; white-space: nowrap; flex: none; height: 22px; font-size: 11px; border-top: 1px solid #a6a6a6; overflow: hidden; }
.sheets a::after { content: ""; position: absolute; right: 0; top: 3px; height: 15px; width: 1px; background: #a0a0a0; }
.sheets .current { background: #fff; color: #217346; font-size: 10px; font-weight: 700; border: 1px solid #aaa; border-top: 0; border-bottom: 2px solid #217346; height: 20px; }
.sheets .current::after { display: none; }
.s34 { width: 33px; } .s118 { width: 118px; } .s80 { width: 80px; } .s97 { width: 97px; } .s54 { width: 54px; } .s75 { width: 75px; } .s48 { width: 48px; }
.s104 { width: 104px; } .s89 { width: 89px; } .s61 { width: 61px; } .s55 { width: 55px; } .s120 { width: 120px; } .s102 { width: 102px; } .s67 { width: 67px; } .s47 { width: 47px; } .s76 { width: 76px; } .s88 { width: 88px; }
.nav { width: 24px; flex: none; }
.nav:last-child { margin-right: 13px; }

/* Status bar */
.status { height: 19px; background: #f3f3f3; display: flex; align-items: center; font-size: 10px; border-bottom: 1px solid #ddd; }
.ready { width: 51px; padding-left: 9px; }
.acc { gap: 2px; font-size: 9px; font-weight: 600; }
.views { margin-left: auto; display: flex; }
.views button { width: 33px; height: 18px; }
.views .on { background: #c8c8c8; }
.z { width: 16px; font-size: 14px; color: #555; }
.zoom { appearance: none; width: 84px; height: 13px; background: linear-gradient(#888, #888) center / 100% 1px no-repeat; }
.zoom::-webkit-slider-thumb { appearance: none; width: 5px; height: 10px; background: #444; }
.pct { width: 34px; text-align: right; padding-right: 11px; }

/* Taskbar */
.taskbar { height: 33px; display: flex; align-items: center; background: linear-gradient(90deg, #22383f, #20343f 50%, #1b2742 85%); color: #fff; }
.start { width: 40px; height: 33px; }
.search { width: 240px; height: 33px; background: #f2f2f2; color: #333; display: flex; align-items: center; padding: 0 4px 0 10px; gap: 9px; font-size: 12px; border-bottom: 1px solid #bbb; flex: none; }
.search input { flex: 1; }
.search input::placeholder { color: #444; opacity: 1; }
.tgrip { width: 4px; height: 13px; border: solid #5a6b74; border-width: 0 1px; margin: 0 9px 0 5px; flex: none; }
.apps { display: flex; }
.apps button { width: 41px; height: 33px; flex: none; }
.apps .active { background: #50636b; border-bottom: 2px solid #76b9ed; }
.apps .second { background: none; width: 34px; margin-left: 4px; padding-top: 1px; }
.mid { margin: 0 10px 0 auto; }
.addr { width: 203px; height: 17px; background: #fff; display: flex; flex: none; }
.addr input { flex: 1; color: #333; }
.addr button { width: 15px; }
.addr .go { border-left: 1px solid #ccc; width: 14px; }
.weather { margin-left: 65px; gap: 8px; font-size: 12px; white-space: nowrap; width: 94px; justify-content: flex-start; }
.tray { display: flex; align-items: center; margin-left: 17px; flex: none; }
.t1 { width: 18px; } .t2 { width: 20px; } .t3 { width: 26px; } .t4 { width: 28px; }
.eng { width: 30px; text-align: center; font-size: 10px; }
.clock { width: 58px; display: flex; flex-direction: column; align-items: center; font-size: 9px; line-height: 15px; }
.notif { position: relative; width: 34px; margin-right: 11px; }
.notif b { position: absolute; right: 3px; bottom: -3px; width: 13px; height: 13px; border-radius: 50%; background: #333b45; border: 1px solid #999; font-size: 9px; line-height: 11px; font-weight: 400; }

.watermark { position: absolute; left: 0; right: 0; bottom: 16px; display: flex; flex-direction: column; align-items: center; color: rgba(190, 190, 190, .5); font-weight: 700; pointer-events: none; }
.wm-ar { font-family: "DejaVu Sans", sans-serif; font-size: 53px; line-height: 58px; }
.wm-en { font-family: Inter, sans-serif; font-size: 31px; line-height: 36px; }
```
FILE: app.js
```js
const body = document.getElementById("rows");
const values = { 1: ["v-a", "00/01/1900"], 3: ["v-c", "1900/01"], 13: ["v-m", "1"], 14: ["v-n", "-"], 15: ["v-o", "0"], 16: ["v-p", "-"] };
// Page-break edges, drawn as the right border of columns E, H, I's neighbour and P.
const dashed = [5, 7, 9, 16];

function addRow(number) {
  const tr = document.createElement("tr");
  const head = document.createElement("th");
  head.textContent = number;
  tr.append(head);
  for (let c = 1; c <= 16; c++) {
    const td = document.createElement("td");
    if (number && values[c]) {
      td.className = values[c][0];
      td.textContent = values[c][1];
    }
    if (dashed.includes(c)) td.classList.add("dashed");
    tr.append(td);
  }
  body.append(tr);
  return tr;
}

dashed[1] = 8;
for (let n = 199; n <= 239; n++) addRow(n);
addRow("").className = "sliver";

document.querySelectorAll(".names th").forEach((th, i) => {
  if (dashed.includes(i)) th.classList.add("dashed");
  if (i === 0 || i === 16) return;
  const b = document.createElement("button");
  b.className = "filter";
  b.setAttribute("aria-label", "Filter column");
  b.innerHTML = '<svg width="7" height="4" viewBox="0 0 7 4"><path d="M0 0h7L3.5 4z" fill="#555"/></svg>';
  th.append(b);
});
```
